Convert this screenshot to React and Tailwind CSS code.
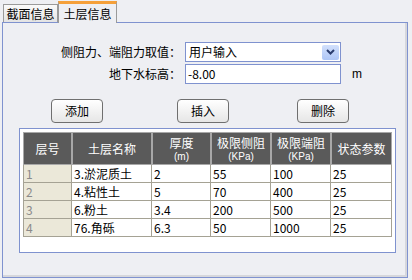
import React from 'react';

const rows = [
  { no: '1', name: '3.淤泥质土', h: '2', side: '55', end: '100', state: '25' },
  { no: '2', name: '4.粘性土', h: '5', side: '70', end: '400', state: '25' },
  { no: '3', name: '6.粉土', h: '3.4', side: '200', end: '500', state: '25' },
  { no: '4', name: '76.角砾', h: '6.3', side: '50', end: '1000', state: '25' },
];

const cols = ['w-[49px]', 'w-[80px]', 'w-[59px]', 'w-[60px]', 'w-[60px]', 'w-[61px]'];

const HeadCell = ({ w, title, unit }) => (
  <div className={`${w} h-full bg-[#5a5a5a] border border-[#a8a8a8] flex flex-col items-center justify-center text-white`}>
    <span className="text-[12px] leading-[16px]">{title}</span>
    {unit && <span className="text-[10px] leading-[12px] font-['Liberation_Sans',sans-serif]">{unit}</span>}
  </div>
);

const Button = ({ children }) => (
  <button className="w-[52px] h-[24px] rounded-[4px] border border-[#6f6f6f] bg-gradient-to-b from-white to-[#e6e6e6] text-[12px] text-black">
    {children}
  </button>
);

export default function App() {
  return (
    <div className="w-[412px] h-[280px] bg-[#eeeff3] font-['Noto_Sans_CJK_SC',sans-serif] text-[12px] text-black overflow-hidden">
      {/* Tabs */}
      <div className="h-[22px] flex items-end pl-[3px]">
        <div className="w-[55px] h-[18px] border border-b-0 border-[#9a9a9a] bg-gradient-to-b from-[#fafafa] to-[#e3e3e3] flex items-center justify-center text-[12px] leading-none">
          截面信息
        </div>
        <div className="relative z-10 -mb-px w-[59px] h-[22px] border-x border-[#9a9a9a] border-t-[3px] border-t-[#f5a03a] bg-[#eeeff3] flex items-center justify-center text-[12px] leading-none">
          土层信息
        </div>
      </div>

      {/* Panel */}
      <div className="ml-[2px] w-[406px] h-[256px] border border-[#7f92cf] bg-[#eeeff3] shadow-[inset_-2px_-2px_0_#d6d7dc]">
        {/* Form */}
        <div className="pt-[19px] flex flex-col gap-[2px]">
          <div className="flex items-center h-[20px]">
            <div className="w-[179px] text-right pr-[1px]">侧阻力、端阻力取值：</div>
            <div className="ml-[3px] w-[156px] h-[20px] border border-[#7f92cf] bg-white flex items-center justify-between pl-[3px] pr-[1px]">
              <span>用户输入</span>
              <span className="w-[17px] h-[15px] rounded-[2px] bg-gradient-to-b from-[#d2e0fc] to-[#aec6f6] flex items-center justify-center">
                <svg width="9" height="6" viewBox="0 0 9 6">
                  <path d="M1 1 L4.5 4.5 L8 1" fill="none" stroke="#2b3d6e" strokeWidth="2" />
                </svg>
              </span>
            </div>
          </div>
          <div className="flex items-center h-[20px]">
            <div className="w-[179px] text-right pr-[1px]">地下水标高：</div>
            <div className="ml-[3px] w-[156px] h-[20px] border border-[#7f92cf] bg-white flex items-center pl-[2px]">
              -8.00
            </div>
            <span className="ml-[11px] font-['Liberation_Sans',sans-serif]">m</span>
          </div>
        </div>

        {/* Buttons */}
        <div className="mt-[15px] flex pl-[48px]">
          <Button>添加</Button>
          <div className="ml-[74px]"><Button>插入</Button></div>
          <div className="ml-[68px]"><Button>删除</Button></div>
        </div>

        {/* Table */}
        <div className="mt-[5px] ml-[16px] w-[377px] h-[125px] border border-[#7f92cf] bg-white p-[3px]">
          <div className="flex h-[33px]">
            <HeadCell w={cols[0]} title="层号" />
            <HeadCell w={cols[1]} title="土层名称" />
            <HeadCell w={cols[2]} title="厚度" unit="(m)" />
            <HeadCell w={cols[3]} title="极限侧阻" unit="(KPa)" />
            <HeadCell w={cols[4]} title="极限端阻" unit="(KPa)" />
            <HeadCell w={cols[5]} title="状态参数" />
          </div>
          {rows.map((r) => (
            <div key={r.no} className="flex h-[18px]">
              <div className={`${cols[0]} bg-[#ebe8d9] border-r border-b border-l border-[#a5a294] text-[#8a8a8a] pl-[2px] leading-[17px]`}>{r.no}</div>
              {[r.name, r.h, r.side, r.end, r.state].map((v, i) => (
                <div key={i} className={`${cols[i + 1]} border-r border-b border-[#a5a294] pl-[2px] leading-[17px]`}>{v}</div>
              ))}
            </div>
          ))}
        </div>
      </div>
    </div>
  );
}
